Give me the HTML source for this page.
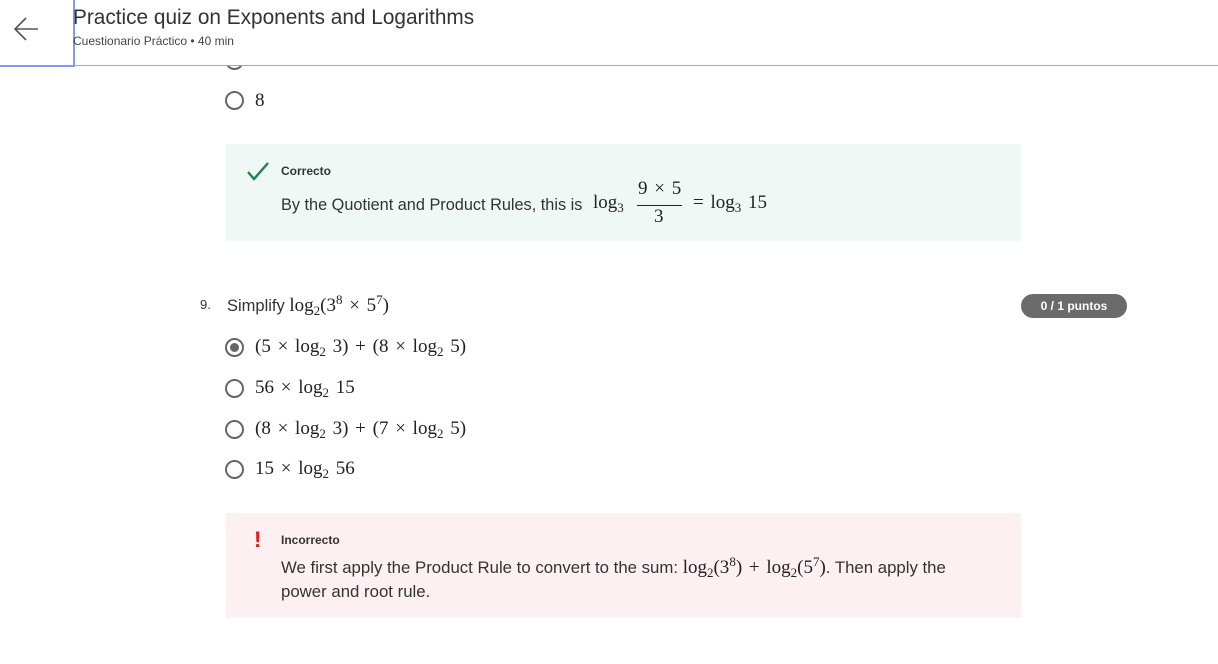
<!DOCTYPE html>
<html><head><meta charset="utf-8"><style>
*{margin:0;padding:0;box-sizing:border-box}
body{width:1218px;height:664px;background:#fff;position:relative;overflow:hidden;font-family:"Liberation Sans",sans-serif;color:#333}
.a{position:absolute;white-space:nowrap}
.m{font-family:"Liberation Serif",serif;font-size:19px;color:#222;word-spacing:2px}
.m sub{font-size:13px;vertical-align:-4px;line-height:0}
.m sup{font-size:13px;vertical-align:7px;line-height:0}
.r{position:absolute;width:19px;height:19px;border:2px solid #666;border-radius:50%;background:#fff}
</style></head><body>
<div class="r" style="left:225px;top:51px"></div>
<div class="a m" style="left:255px;top:50px">20</div>
<div class="a" style="left:0;top:0;width:1218px;height:65px;background:#fff"></div>
<div class="a" style="left:0;top:65px;width:1218px;height:1px;background:#aaa"></div>
<div class="a" style="left:0;top:0;width:75px;height:67px;background:#fff;border-right:2px solid #7d9ef0;border-bottom:2px solid #7d9ef0"></div>
<svg class="a" style="left:13px;top:16px" width="27" height="26" viewBox="0 0 27 26"><path d="M25 13H2M13 2L2 13l11 11" fill="none" stroke="#555" stroke-width="1.6"/></svg>
<div class="a" style="left:73px;top:6px;font-size:20.8px;color:#333">Practice quiz on Exponents and Logarithms</div>
<div class="a" style="left:73px;top:34px;font-size:12px;color:#444">Cuestionario Práctico • 40 min</div>
<div class="r" style="left:225px;top:91px"></div>
<div class="a m" style="left:255px;top:90px">8</div>
<div class="a" style="left:226px;top:144px;width:795px;height:97px;background:#f0f8f5"></div>
<svg class="a" style="left:247px;top:162px" width="22" height="19" viewBox="0 0 22 19"><path d="M1 10l6 7L21 1" fill="none" stroke="#1f8354" stroke-width="2.4"/></svg>
<div class="a" style="left:281px;top:164px;font-size:12px;font-weight:bold;color:#333">Correcto</div>
<div class="a" style="left:281px;top:196px;font-size:16.3px">By the Quotient and Product Rules, this is</div>
<div class="a m" style="left:593px;top:192px">log<sub>3</sub></div>
<div class="a m" style="left:638px;top:178px">9 × 5</div>
<div class="a" style="left:637px;top:205px;width:45px;height:1px;background:#222"></div>
<div class="a m" style="left:654px;top:206px">3</div>
<div class="a m" style="left:693px;top:192px">= log<sub>3</sub> 15</div>
<div class="a" style="left:200px;top:297px;font-size:13px">9.</div>
<div class="a" style="left:227px;top:295px;font-size:16.5px">Simplify <span class="m">log<sub>2</sub>(3<sup>8</sup> × 5<sup>7</sup>)</span></div>
<div class="a" style="left:1021px;top:294px;width:106px;height:24px;border-radius:12px;background:#6b6b6b;color:#fff;font-size:12px;font-weight:bold;text-align:center;line-height:24px">0 / 1 puntos</div>
<div class="r" style="left:225px;top:338px"></div><div class="a" style="left:230px;top:343px;width:9px;height:9px;border-radius:50%;background:#666"></div>
<div class="a m" style="left:255px;top:336px">(5 × log<sub>2</sub> 3) + (8 × log<sub>2</sub> 5)</div>
<div class="r" style="left:225px;top:379px"></div>
<div class="a m" style="left:255px;top:377px">56 × log<sub>2</sub> 15</div>
<div class="r" style="left:225px;top:420px"></div>
<div class="a m" style="left:255px;top:418px">(8 × log<sub>2</sub> 3) + (7 × log<sub>2</sub> 5)</div>
<div class="r" style="left:225px;top:460px"></div>
<div class="a m" style="left:255px;top:458px">15 × log<sub>2</sub> 56</div>
<div class="a" style="left:226px;top:513px;width:795px;height:105px;background:#fdf0f2"></div>
<div class="a" style="left:254px;top:527px;font-size:22px;font-weight:bold;color:#e01b1b">!</div>
<div class="a" style="left:281px;top:533px;font-size:12px;font-weight:bold">Incorrecto</div>
<div class="a" style="left:281px;top:557px;font-size:16.8px">We first apply the Product Rule to convert to the sum: <span class="m">log<sub>2</sub>(3<sup>8</sup>) + log<sub>2</sub>(5<sup>7</sup>)</span>. Then apply the</div>
<div class="a" style="left:281px;top:582px;font-size:16.8px">power and root rule.</div>
</body></html>
